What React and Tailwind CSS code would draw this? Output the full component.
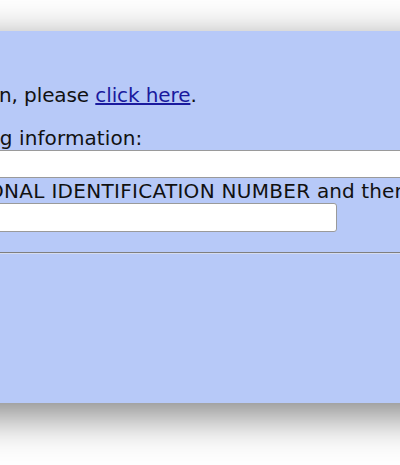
import React from 'react';

const App = () => {
  return (
    <div className="w-[400px] h-[465px] overflow-hidden bg-white relative font-['DejaVu_Sans',sans-serif] text-[20px] leading-[23px] tracking-[0.1px] text-[#111]">
      <div className="h-[31px]" />
      {/* login panel, wider than the window */}
      <div className="-mx-[60px] h-[372px] bg-[#b7c9f8] shadow-[0_12px_40px_rgba(0,0,0,0.5)] px-[60px]">
        <div className="pt-[53px]">
          <p className="whitespace-nowrap -ml-[1px] tracking-[-0.1px]">
            n, please{' '}
            <a href="#" className="text-[#1a1a9e] underline">click here</a>.
          </p>
          <p className="whitespace-nowrap mt-[20px] -ml-[13px]">ng information:</p>
          <input
            type="text"
            className="block -ml-[20px] w-[480px] h-[28px] bg-white border border-[#9a9a9a] rounded-[2px] outline-none"
          />
          <p className="whitespace-nowrap mt-[2px] -ml-[12px]">
            <span className="tracking-[0.3px]">ONAL IDENTIFICATION NUMBER</span> and then
          </p>
          <input
            type="text"
            className="block -ml-[20px] w-[357px] h-[29px] bg-white border border-[#9a9a9a] rounded-[3px] outline-none"
          />
          <hr className="mt-[20px] -mx-[60px] border-0 border-t border-t-[#7f7f7f] border-b border-b-[#d5dcef]" />
        </div>
      </div>
    </div>
  );
};

export default App;
